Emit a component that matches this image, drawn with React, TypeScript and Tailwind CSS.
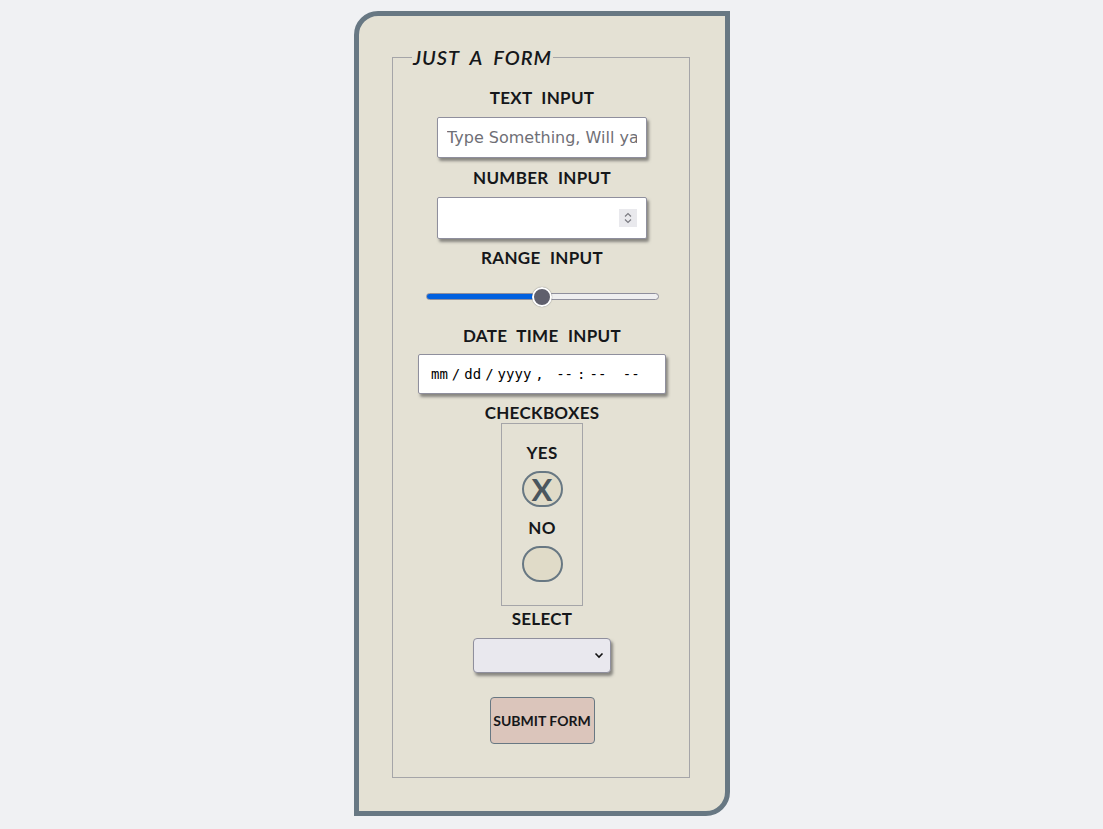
import { useState } from "react";

const label = "font-['Lato',sans-serif] font-bold text-[17px] leading-5 tracking-[0.3px] [word-spacing:5px] text-[#15171a] uppercase";
const field = "bg-white border border-[#8f8f9d] rounded-[2px] shadow-[2px_3px_3px_rgba(60,60,60,0.55)]";

export default function App() {
  const [yes, setYes] = useState(true);
  const [no, setNo] = useState(false);

  return (
    <div className="min-h-[829px] w-full bg-[#f0f1f3] flex justify-center pt-[11px] pr-[19px]">
      <div className="w-[376px] h-[805px] border-[5px] border-[#687883] rounded-tl-[24px] rounded-br-[24px] bg-[#e4e1d4] pl-[33px] pr-[35px] pt-[29px]">
        <fieldset className="border border-[#a5a5a8] h-[733px] flex flex-col items-center pl-[10px] pr-[8px]">
          <legend className="ml-[9px] px-[1px] font-['Lato',sans-serif] italic font-semibold text-[20px] leading-6 tracking-[1px] [word-spacing:5px] text-[#15171a] uppercase">
            Just a Form
          </legend>

          <div className={`${label} mt-[19px]`}>Text Input</div>
          <input
            type="text"
            placeholder="Type Something, Will ya"
            className={`${field} mt-[9px] w-[210px] h-[41px] px-[9px] font-['DejaVu_Sans',sans-serif] text-[16px] text-[#222] placeholder:text-[#6f6f76] outline-none`}
          />

          <div className={`${label} mt-[10px]`}>Number Input</div>
          <div className="relative mt-[9px]">
            <input
              type="number"
              className={`${field} w-[210px] h-[42px] px-[9px] text-[16px] outline-none [appearance:textfield] [&::-webkit-inner-spin-button]:appearance-none`}
            />
            <svg className="absolute right-[10px] top-[12px]" width="18" height="18" viewBox="0 0 18 18">
              <rect width="18" height="18" fill="#e9e9ed" />
              <path d="M6 7.5 L9 4.5 L12 7.5" stroke="#7a7a80" strokeWidth="1.2" fill="none" />
              <path d="M6 10.5 L9 13.5 L12 10.5" stroke="#7a7a80" strokeWidth="1.2" fill="none" />
            </svg>
          </div>

          <div className={`${label} mt-[9px]`}>Range Input</div>
          <input
            type="range"
            defaultValue={50}
            className="mt-[25px] w-[233px] h-[7px] appearance-none rounded-full border border-[#8f8f9d] bg-[linear-gradient(to_right,#0060df_50%,#efeff0_50%)] outline-none [&::-webkit-slider-thumb]:appearance-none [&::-webkit-slider-thumb]:w-[20px] [&::-webkit-slider-thumb]:h-[20px] [&::-webkit-slider-thumb]:rounded-full [&::-webkit-slider-thumb]:bg-[#5f5f6c] [&::-webkit-slider-thumb]:border-2 [&::-webkit-slider-thumb]:border-white [&::-webkit-slider-thumb]:shadow-[0_0_1px_rgba(0,0,0,0.6)]"
          />

          <div className={`${label} mt-[26px]`}>Date Time Input</div>
          <input
            type="datetime-local"
            className={`${field} mt-[8px] w-[248px] h-[40px] pl-[11px] font-['DejaVu_Sans_Mono',monospace] text-[14px] text-black outline-none [&::-webkit-calendar-picker-indicator]:hidden [&::-webkit-datetime-edit-text]:px-[3px]`}
          />

          <div className={`${label} mt-[9px]`}>Checkboxes</div>
          <fieldset className="border border-[#a5a5a8] w-[82px] h-[183px] flex flex-col items-center pt-[19px]">
            <label className={label}>Yes</label>
            <button
              type="button"
              onClick={() => setYes(!yes)}
              className="mt-[8px] w-[41px] h-[36px] rounded-full border-2 border-[#687883] bg-[#e0dbc8] flex items-center justify-center font-['Lato',sans-serif] font-bold text-[31px] leading-none text-[#4a565e]"
            >
              {yes ? "X" : ""}
            </button>
            <label className={`${label} mt-[11px]`}>No</label>
            <button
              type="button"
              onClick={() => setNo(!no)}
              className="mt-[8px] w-[41px] h-[36px] rounded-full border-2 border-[#687883] bg-[#e0dbc8] flex items-center justify-center font-['Lato',sans-serif] font-bold text-[31px] leading-none text-[#4a565e]"
            >
              {no ? "X" : ""}
            </button>
          </fieldset>

          <div className={`${label} mt-[3px]`}>Select</div>
          <div className="relative mt-[9px]">
            <select className="appearance-none w-[138px] h-[35px] rounded-[4px] border border-[#8f8f9d] bg-[#e9e8ee] shadow-[2px_3px_3px_rgba(60,60,60,0.55)] outline-none">
              <option></option>
              <option>One</option>
              <option>Two</option>
            </select>
            <svg className="absolute right-[7px] top-[14px] pointer-events-none" width="10" height="7" viewBox="0 0 10 7">
              <path d="M1.5 1.5 L5 5 L8.5 1.5" stroke="#111" strokeWidth="1.6" fill="none" />
            </svg>
          </div>

          <button
            type="submit"
            className="mt-[24px] w-[105px] h-[47px] rounded-[4px] border border-[#687883] bg-[#dbc5bb] font-['Lato',sans-serif] font-bold text-[14px] text-[#15171a] uppercase"
          >
            Submit Form
          </button>
        </fieldset>
      </div>
    </div>
  );
}
